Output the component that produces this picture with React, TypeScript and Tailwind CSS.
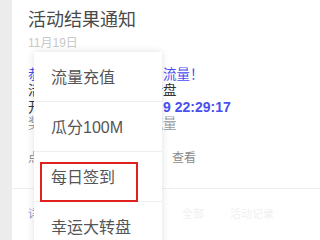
import React from 'react';

const menuItems = ['流量充值', '瓜分100M', '每日签到', '幸运大转盘'];

export default function App() {
  return (
    <div
      className="relative flex w-[320px] h-[240px] overflow-hidden bg-white"
      style={{ fontFamily: '"Liberation Sans", "Noto Sans CJK SC", sans-serif' }}
    >
      {/* left gutter */}
      <div className="w-[12px] shrink-0 bg-[#ececec]" />

      {/* notification card */}
      <div className="flex-1 flex flex-col bg-white pl-[16px] pt-[9px] whitespace-nowrap">
        <div className="text-[18px] leading-[23px] text-[#4a4a4a]">活动结果通知</div>
        <div className="mt-[4px] text-[12px] leading-[14px] text-[#c9c9c9]">11月19日</div>

        <div className="mt-[17px] flex flex-col text-[13.5px] leading-[16px]">
          <div className="flex text-[#4b4ff0]">
            <span className="w-[135px] overflow-hidden">恭喜您在活动中赢得了</span>
            <span>流量！</span>
          </div>
          <div className="flex text-[#333]">
            <span className="w-[135px] overflow-hidden">活动名称：流量幸运转</span>
            <span>盘</span>
          </div>
          <div className="flex text-[#333]">
            <span className="w-[135px] overflow-hidden">
              开奖时间：<span className="text-[14px] font-bold text-[#4b4ff0]">2019-11-1</span>
            </span>
            <span className="text-[14px] font-bold text-[#4b4ff0]">9 22:29:17</span>
          </div>
          <div className="flex text-[#9a9a9a]">
            <span className="w-[135px] overflow-hidden">奖品：每日签到赠送流</span>
            <span>量</span>
          </div>
        </div>

        <div className="mt-[18px] flex items-center text-[12px] leading-[16px] text-[#8a8a8a]">
          <span className="w-[133px] overflow-hidden">点击下方查看活动详情</span>
          <span className="w-px h-[12px] bg-[#cfcfcf]" />
          <span className="ml-[10px]">查看</span>
        </div>

        <div className="mt-[22px] -ml-[28px] border-t border-[#eeeeee]" />

        <div className="mt-[17px] flex items-center text-[11px] leading-[16px]">
          <span className="w-[154px] text-[#8f9bd0]">详情</span>
          <span className="text-[#f0f0f0]">全部</span>
          <span className="ml-[26px] text-[#f0f0f0]">活动记录</span>
        </div>
      </div>

      {/* popup menu */}
      <div className="absolute left-[34px] top-[52px] w-[128px] flex flex-col bg-white shadow-[0_0_8px_rgba(0,0,0,0.12)]">
        {menuItems.map((item) => (
          <div
            key={item}
            className="h-[50px] shrink-0 flex items-center pl-[17px] pt-[2px] border-b border-[#eeeeee] text-[16px] text-[#555555]"
          >
            {item}
          </div>
        ))}
      </div>

      {/* highlight annotation */}
      <div className="absolute left-[40px] top-[162px] w-[98px] h-[40px] border-2 border-[#e0201c]" />
    </div>
  );
}
